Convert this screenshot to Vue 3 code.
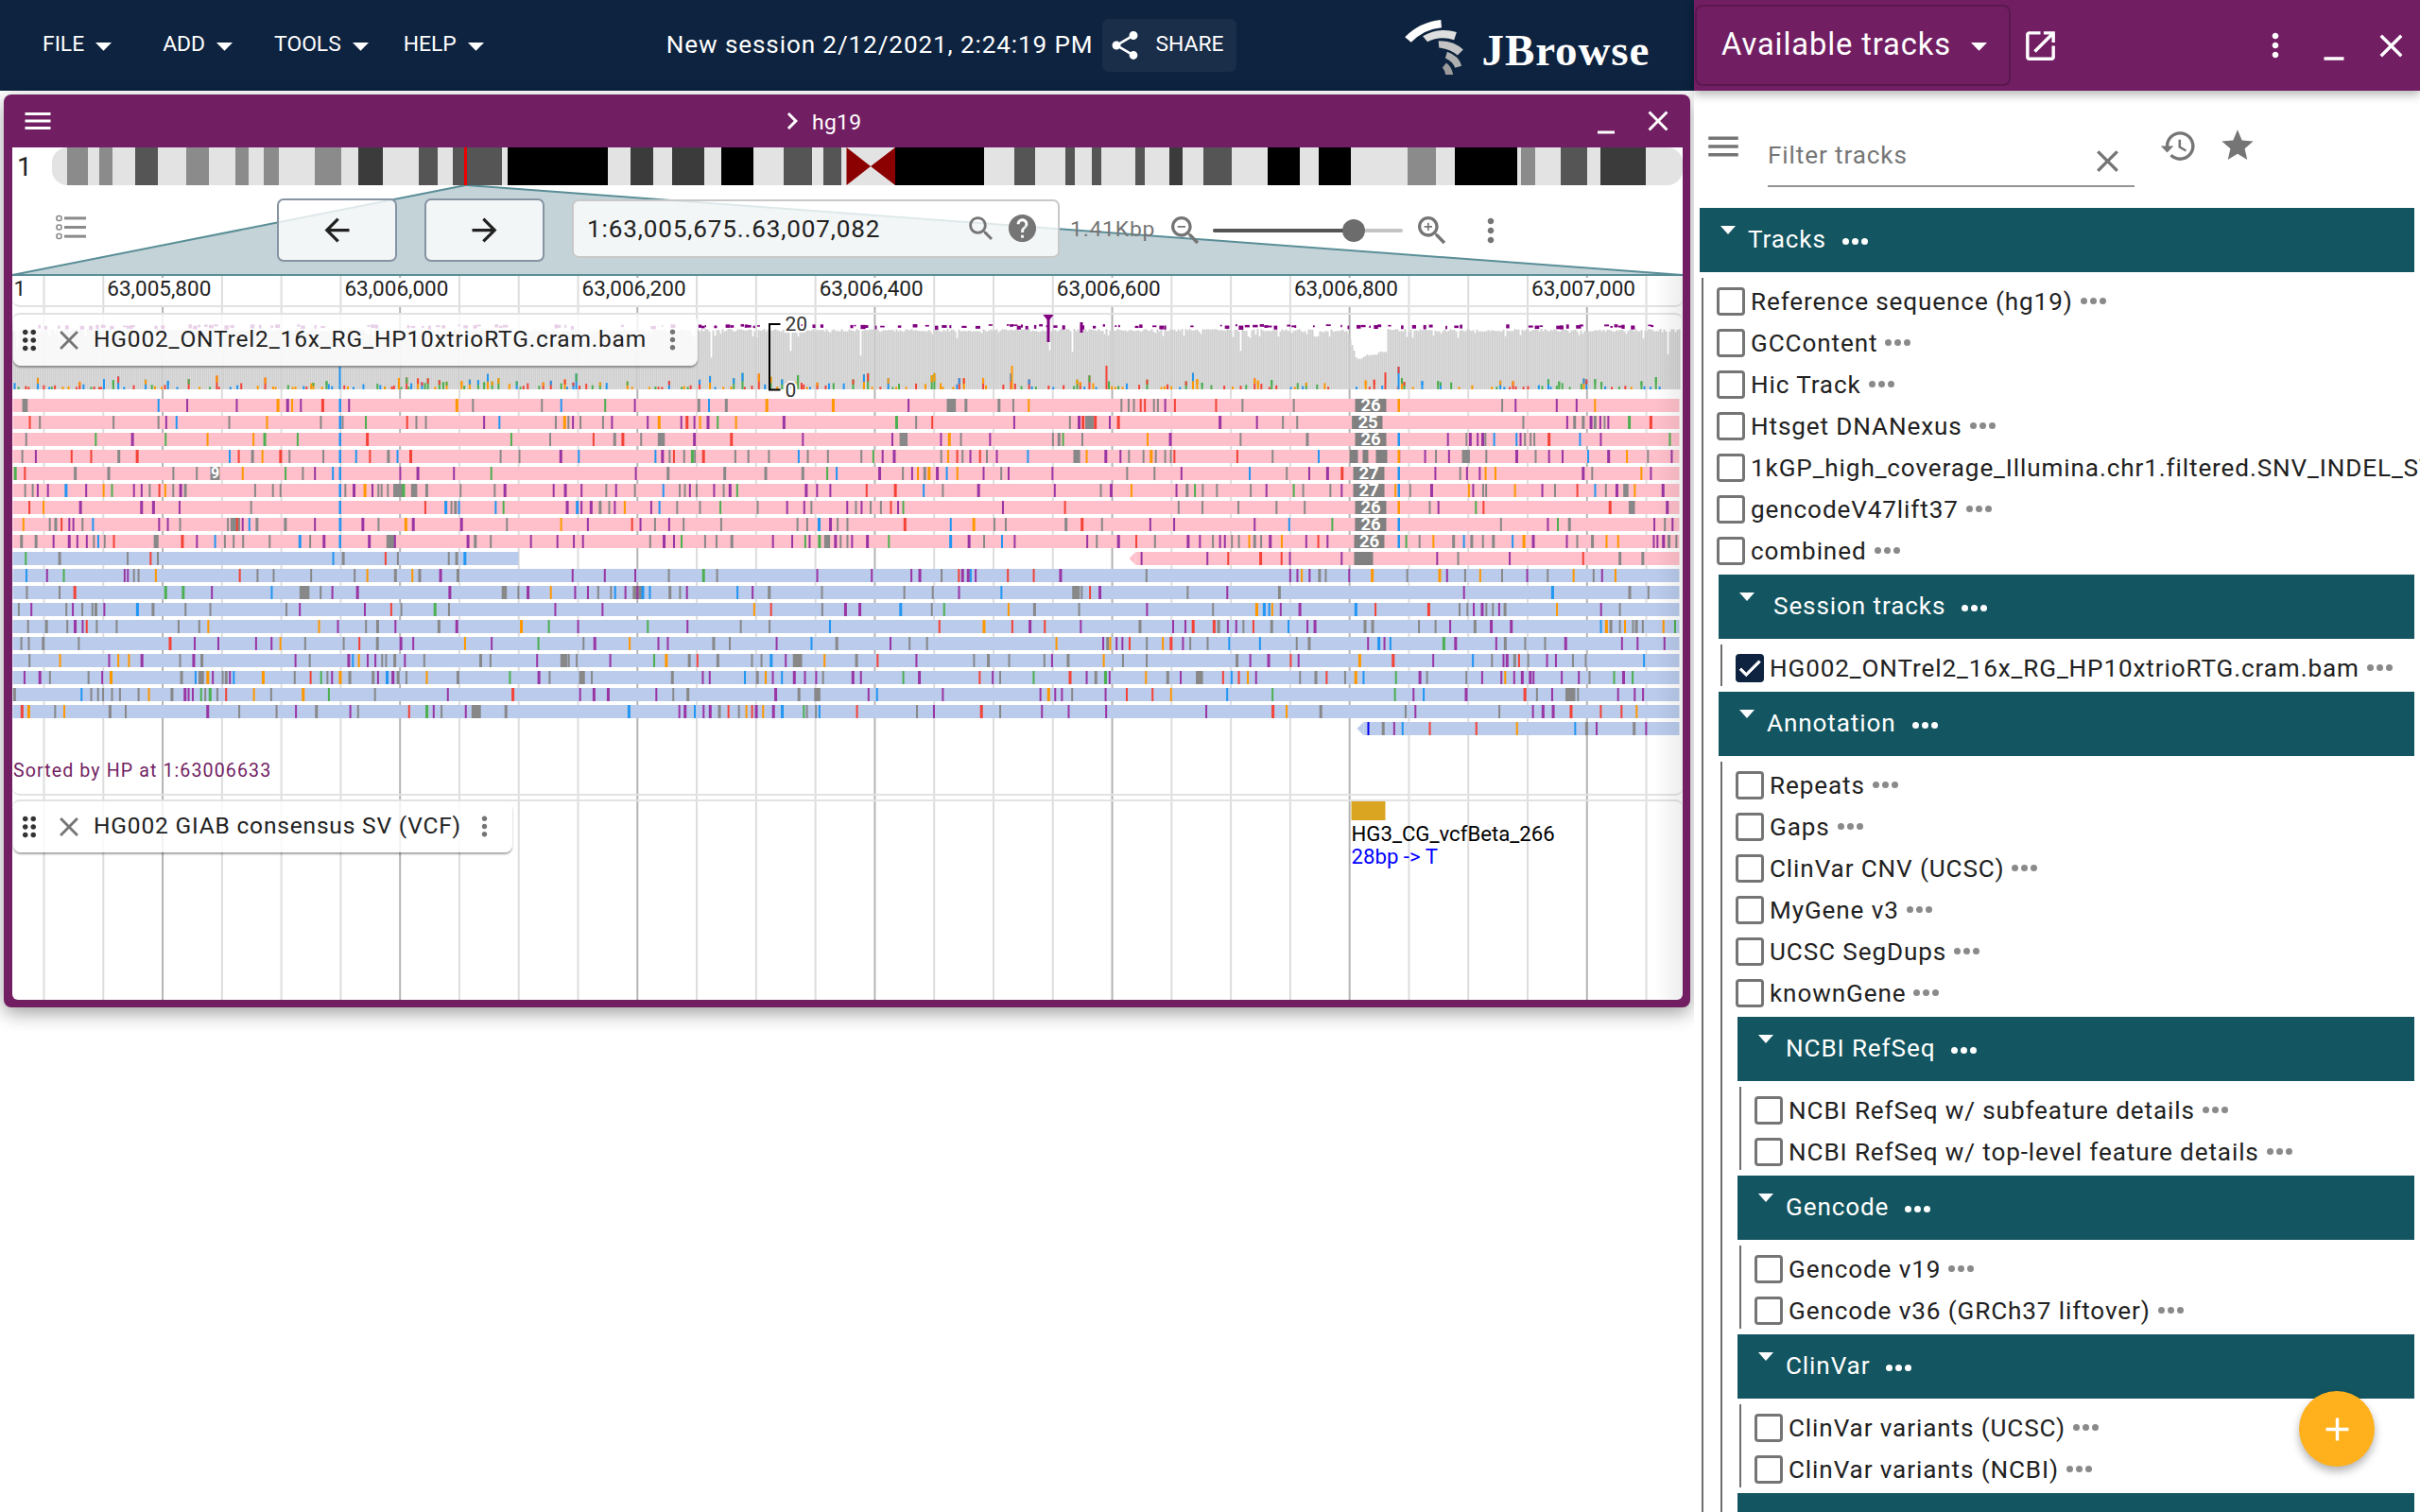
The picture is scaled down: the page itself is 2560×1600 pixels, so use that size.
<script setup>
const icons = {
  menu: 'M3 18h18v-2H3v2zm0-5h18v-2H3v2zm0-7v2h18V6H3z',
  close: 'M19 6.41L17.59 5 12 10.59 6.41 5 5 6.41 10.59 12 5 17.59 6.41 19 12 13.41 17.59 19 19 17.59 13.41 12z',
  minimize: 'M6 19h12v2H6z',
  more: 'M12 8c1.1 0 2-.9 2-2s-.9-2-2-2-2 .9-2 2 .9 2 2 2zm0 2c-1.1 0-2 .9-2 2s.9 2 2 2 2-.9 2-2-.9-2-2-2zm0 6c-1.1 0-2 .9-2 2s.9 2 2 2 2-.9 2-2-.9-2-2-2z',
  caret: 'M7 10l5 5 5-5z',
  share: 'M18 16.08c-.76 0-1.44.3-1.96.77L8.91 12.7c.05-.23.09-.46.09-.7s-.04-.47-.09-.7l7.05-4.11c.54.5 1.25.81 2.04.81 1.66 0 3-1.34 3-3s-1.34-3-3-3-3 1.34-3 3c0 .24.04.47.09.7L8.04 9.81C7.5 9.31 6.79 9 6 9c-1.66 0-3 1.34-3 3s1.34 3 3 3c.79 0 1.5-.31 2.04-.81l7.12 4.16c-.05.21-.08.43-.08.65 0 1.61 1.31 2.92 2.92 2.92 1.61 0 2.92-1.31 2.92-2.92s-1.31-2.92-2.92-2.92z',
  search: 'M15.5 14h-.79l-.28-.27C15.41 12.59 16 11.11 16 9.5 16 5.91 13.09 3 9.5 3S3 5.91 3 9.5 5.91 16 9.5 16c1.61 0 3.09-.59 4.23-1.57l.27.28v.79l5 4.99L20.49 19l-4.99-5zm-6 0C7.01 14 5 11.99 5 9.5S7.01 5 9.5 5 14 7.01 14 9.5 11.99 14 9.5 14z',
  help: 'M12 2C6.48 2 2 6.48 2 12s4.48 10 10 10 10-4.48 10-10S17.52 2 12 2zm1 17h-2v-2h2v2zm2.07-7.75l-.9.92C13.45 12.9 13 13.5 13 15h-2v-.5c0-1.1.45-2.1 1.17-2.83l1.24-1.26c.37-.36.59-.86.59-1.41 0-1.1-.9-2-2-2s-2 .9-2 2H8c0-2.21 1.79-4 4-4s4 1.79 4 4c0 .88-.36 1.68-.93 2.25z',
  zoomOut: 'M15.5 14h-.79l-.28-.27C15.41 12.59 16 11.11 16 9.5 16 5.91 13.09 3 9.5 3S3 5.91 3 9.5 5.91 16 9.5 16c1.61 0 3.09-.59 4.23-1.57l.27.28v.79l5 4.99L20.49 19l-4.99-5zm-6 0C7.01 14 5 11.99 5 9.5S7.01 5 9.5 5 14 7.01 14 9.5 11.99 14 9.5 14zM7 9h5v1H7z',
  zoomIn: 'M15.5 14h-.79l-.28-.27C15.41 12.59 16 11.11 16 9.5 16 5.91 13.09 3 9.5 3S3 5.91 3 9.5 5.91 16 9.5 16c1.61 0 3.09-.59 4.23-1.57l.27.28v.79l5 4.99L20.49 19l-4.99-5zm-6 0C7.01 14 5 11.99 5 9.5S7.01 5 9.5 5 14 7.01 14 9.5 11.99 14 9.5 14zm2.5-4h-2v2H9v-2H7V9h2V7h1v2h2v1z',
  history: 'M13 3c-4.97 0-9 4.03-9 9H1l3.89 3.89.07.14L9 12H6c0-3.87 3.13-7 7-7s7 3.13 7 7-3.13 7-7 7c-1.93 0-3.68-.79-4.94-2.06l-1.42 1.42C8.27 19.99 10.51 21 13 21c4.97 0 9-4.03 9-9s-4.03-9-9-9zm-1 5v5l4.28 2.54.72-1.21-3.5-2.08V8H12z',
  star: 'M12 17.27L18.18 21l-1.64-7.03L22 9.24l-7.19-.61L12 2 9.19 8.63 2 9.24l5.46 4.73L5.82 21z',
  open: 'M19 19H5V5h7V3H5c-1.11 0-2 .9-2 2v14c0 1.1.89 2 2 2h14c1.1 0 2-.9 2-2v-7h-2v7zM14 3v2h3.59l-9.83 9.83 1.41 1.41L19 6.41V10h2V3h-7z',
  drag: 'M11 18c0 1.1-.9 2-2 2s-2-.9-2-2 .9-2 2-2 2 .9 2 2zm-2-8c-1.1 0-2 .9-2 2s.9 2 2 2 2-.9 2-2-.9-2-2-2zm0-6c-1.1 0-2 .9-2 2s.9 2 2 2 2-.9 2-2-.9-2-2-2zm6 4c1.1 0 2-.9 2-2s-.9-2-2-2-2 .9-2 2 .9 2 2 2zm0 2c-1.1 0-2 .9-2 2s.9 2 2 2 2-.9 2-2-.9-2-2-2zm0 6c-1.1 0-2 .9-2 2s.9 2 2 2 2-.9 2-2-.9-2-2-2z',
  back: 'M20 11H7.83l5.59-5.59L12 4l-8 8 8 8 1.41-1.41L7.83 13H20v-2z',
  forward: 'M12 4l-1.41 1.41L16.17 11H4v2h12.17l-5.58 5.59L12 20l8-8z',
  chevron: 'M10 6L8.59 7.41 13.17 12l-4.58 4.59L10 18l6-6z',
  add: 'M19 13h-6v6h-2v-6H5v-2h6V5h2v6h6v2z',
}

const menus = ['FILE', 'ADD', 'TOOLS', 'HELP']

// cytobands, in page pixels
const G1 = '#8b8b8b'
const G2 = '#555555'
const G3 = '#3b3b3b'
const bands = [
  [71, 93, G1], [105, 119, G1], [143, 167, G2], [197, 221, G1], [249, 263, G1], [279, 295, G1],
  [333, 361, G1], [379, 405, G3], [443, 463, G2], [479, 531, G2], [537, 643, '#000'], [667, 691, G3],
  [711, 745, G3], [763, 797, '#000'], [829, 859, G2], [871, 890, G2], [947, 1041, '#000'], [1073, 1095, G2],
  [1127, 1137, G2], [1155, 1165, G2], [1201, 1211, G2], [1237, 1251, G3], [1273, 1303, G2], [1341, 1375, '#000'],
  [1395, 1429, '#000'], [1489, 1519, G1], [1539, 1605, '#000'], [1609, 1624, G1], [1651, 1679, G2], [1693, 1741, G3],
]

const ticks = []
for (let k = 0; k < 28; k++) ticks.push({ x: 45 + 62.78 * k, major: k % 4 === 2 })
const rulerLabels = ['63,005,800', '63,006,000', '63,006,200', '63,006,400', '63,006,600', '63,006,800', '63,007,000']
  .map((text, i) => ({ text, x: 45 + 62.78 * (1 + i * 4) + 5 }))

// seeded so the picture stays the same between runs
let seed = 20210212
function rnd() {
  seed |= 0
  seed = (seed + 0x6d2b79f5) | 0
  let t = Math.imul(seed ^ (seed >>> 15), 1 | seed)
  t = (t + Math.imul(t ^ (t >>> 7), 61 | t)) ^ t
  return ((t ^ (t >>> 14)) >>> 0) / 4294967296
}

const GREY = '#888888'
const PURPLE = '#9a35a4'
const RED = '#f44336'
const ORANGE = '#ff9800'
const BLUE = '#2196f3'
const GREEN = '#4caf50'
function pickColor() {
  const r = rnd()
  if (r < 0.38) return GREY
  if (r < 0.68) return PURPLE
  if (r < 0.78) return RED
  if (r < 0.86) return ORANGE
  if (r < 0.94) return BLUE
  return GREEN
}

const reads = []
const marks = []
function addRead(y, x1, x2, fill, mean) {
  reads.push({ x: x1, y, w: x2 - x1, fill })
  let x = x1 + rnd() * 20
  let burst = 0
  while (x < x2 - 2) {
    const c = pickColor()
    const w = c === GREY && rnd() < 0.08 ? 5 + rnd() * 6 : 2 + Math.round(rnd() * 0.7)
    if (x + w < x2) marks.push({ x, y, w, fill: c })
    if (burst > 0) {
      burst--
      x += 3 + rnd() * 8
    } else {
      if (rnd() < 0.07) burst = 2 + Math.floor(rnd() * 6)
      x += 7 + -Math.log(1 - rnd()) * mean
    }
  }
}

const pinkMean = [40, 37, 30, 22, 29, 14, 35, 30, 19]
pinkMean.forEach((m, i) => addRead(422 + 18 * i, 13, 1776, '#ffc0cb', m))
addRead(584, 13, 548, '#bacbec', 24)
addRead(584, 1201, 1776, '#ffc0cb', 22)
const blueMean = [30, 30, 34, 29, 26, 30, 18, 26, 26]
blueMean.forEach((m, i) => addRead(602 + 18 * i, 13, 1776, '#bacbec', m))
addRead(764, 1442, 1776, '#bacbec', 24)

// the common SNP column near the middle and the homopolymer column
for (let i = 0; i < 9; i++) {
  marks.push({ x: 358, y: 422 + 18 * i, w: 2.5, fill: BLUE })
  if (i !== 1) marks.push({ x: 1478, y: 422 + 18 * i, w: 2.5, fill: i % 3 ? BLUE : ORANGE })
}
marks.push({ x: 222, y: 494, w: 10, fill: GREY })

const insertions = [
  { x: 1433, w: 33, y: 422, t: '26' }, { x: 1431, w: 31, y: 440, t: '25' }, { x: 1433, w: 33, y: 458, t: '26' },
  { x: 1431, w: 33, y: 494, t: '27' }, { x: 1431, w: 33, y: 512, t: '27' }, { x: 1433, w: 33, y: 530, t: '26' },
  { x: 1433, w: 33, y: 548, t: '26' }, { x: 1432, w: 32, y: 566, t: '26' },
  { x: 1427, w: 9, y: 476, t: '' }, { x: 1441, w: 6, y: 476, t: '' }, { x: 1455, w: 12, y: 476, t: '' },
  { x: 1432, w: 20, y: 584, t: '' },
]

// coverage
const coverage = []
for (let x = 13; x < 1776; x += 2) {
  let top = 348 + rnd() * 3
  if (rnd() < 0.12) top += rnd() * 8
  if (rnd() < 0.012) top += 10 + rnd() * 22
  if (x > 1350 && x < 1400 && rnd() < 0.25) top += rnd() * 10
  if (x >= 1433 && x <= 1466) top = 378 - (x - 1433) * 0.24 + rnd() * 3
  if (x > 1424 && x < 1433) top = 350 + (x - 1424) * 3
  coverage.push({ x, y: top, h: 412 - top })
}

const snpCols = []
for (let x = 14; x < 1774;) {
  const h = 2.5 + Math.pow(rnd(), 3) * 15
  const c = [ORANGE, RED, BLUE, GREEN][Math.floor(rnd() * 4)]
  const c2 = [ORANGE, RED, BLUE, GREEN][Math.floor(rnd() * 4)]
  snpCols.push({ x, y: 412 - h, h, fill: c })
  if (h > 7) snpCols.push({ x, y: 412 - h, h: h / 2, fill: c2 })
  x += 2.2 + -Math.log(1 - rnd()) * 4.5
}
snpCols.push({ x: 358, y: 388, h: 24, fill: BLUE }, { x: 1069, y: 387, h: 25, fill: ORANGE },
  { x: 1169, y: 387, h: 25, fill: RED }, { x: 1464, y: 394, h: 18, fill: RED },
  { x: 1478, y: 388, h: 24, fill: BLUE }, { x: 1478, y: 388, h: 7, fill: RED })

const purple = []
for (let x = 500; x < 1776;) {
  const w = 1.5 + rnd() * 4
  if (x < 810 || x > 830) purple.push({ x, y: 343 + rnd() * 2, w, h: 1.5 + rnd() * 3 })
  x += 3 + -Math.log(1 - rnd()) * 8
}
for (let x = 40; x < 500;) {
  purple.push({ x, y: 343 + rnd() * 2, w: 2 + rnd() * 3, h: 1.5 + rnd() * 3 })
  x += 3 + -Math.log(1 - rnd()) * 9
}

const topTracks = ['Reference sequence (hg19)', 'GCContent', 'Hic Track', 'Htsget DNANexus',
  '1kGP_high_coverage_Illumina.chr1.filtered.SNV_INDEL_SV_phased_panel', 'gencodeV47lift37', 'combined']
const annotationTracks = ['Repeats', 'Gaps', 'ClinVar CNV (UCSC)', 'MyGene v3', 'UCSC SegDups', 'knownGene']
const subGroups = [
  { name: 'NCBI RefSeq', tracks: ['NCBI RefSeq w/ subfeature details', 'NCBI RefSeq w/ top-level feature details'] },
  { name: 'Gencode', tracks: ['Gencode v19', 'Gencode v36 (GRCh37 liftover)'] },
  { name: 'ClinVar', tracks: ['ClinVar variants (UCSC)', 'ClinVar variants (NCBI)'] },
]
</script>

<template>
  <div class="app">
    <div class="main">
      <header class="topbar">
        <button v-for="m in menus" :key="m" class="menu-btn">
          <span class="lift">{{ m }}</span><svg class="i caret" viewBox="0 0 24 24"><path :d="icons.caret" /></svg>
        </button>
        <span class="session lift">New session 2/12/2021, 2:24:19 PM</span>
        <div class="share">
          <svg class="i share-i" viewBox="0 0 24 24"><path :d="icons.share" /></svg>
          <span class="lift">SHARE</span>
        </div>
        <div class="logo">
          <svg class="logo-mark" viewBox="48 33 186 178">
            <path fill="#ffffff" d="M48 88Q95 40 163 33L165 58Q110 62 68 105Z" />
            <path fill="#dedede" d="M105 85Q155 55 213 72L205 97Q160 83 120 103Z" />
            <path fill="#c4c4c4" d="M155 100Q205 100 234 128L216 146Q190 124 157 122Z" />
            <path fill="#b0b0b0" d="M183 135Q220 148 229 180L208 186Q200 165 177 155Z" />
            <path fill="#9c9c9c" d="M180 170Q197 182 202 208L178 208Q176 195 168 185Z" />
          </svg>
          <span class="logo-text">JBrowse</span>
        </div>
      </header>

      <section class="view">
        <div class="view-head">
          <svg class="i head-menu" viewBox="0 0 24 24"><path :d="icons.menu" /></svg>
          <svg class="i head-chevron" viewBox="0 0 24 24"><path :d="icons.chevron" /></svg>
          <span class="view-name">hg19</span>
          <svg class="i head-min" viewBox="0 0 24 24"><path :d="icons.minimize" /></svg>
          <svg class="i head-close" viewBox="0 0 24 24"><path :d="icons.close" /></svg>
        </div>

        <div class="view-body">
          <div class="overview">
            <span class="chrom">1</span>
            <svg class="bands" viewBox="55 0 1725 40" width="1725" height="40">
              <rect x="55" y="0" width="1725" height="40" rx="16" fill="#e3e3e3" />
              <rect v-for="b in bands" :key="b[0]" :x="b[0]" y="0" :width="b[1] - b[0]" height="40" :fill="b[2]" />
              <polygon points="895.5,0 921,20 895.5,40" fill="#8b0000" />
              <polygon points="947,0 921,20 947,40" fill="#8b0000" />
              <rect x="491" y="0" width="3" height="40" fill="#ee0000" />
            </svg>
          </div>

          <div class="toolbar">
            <svg class="zoom-poly" viewBox="12.5 196 1767 96" width="1767" height="96">
              <polygon points="492,196 494,196 1780,291 12.5,291" fill="#c4d3d7" stroke="#5a8e97" stroke-width="2" />
            </svg>
            <svg class="list-i" viewBox="0 0 32 27">
              <g fill="none" stroke="#8a8a8a" stroke-width="1.6">
                <rect x="1" y="1.5" width="5" height="5" rx="2" />
                <rect x="1" y="11" width="5" height="5" rx="2" />
                <rect x="1" y="20.5" width="5" height="5" rx="2" />
              </g>
              <rect x="9" y="2.4" width="23" height="3" fill="#8a8a8a" />
              <rect x="9" y="12" width="23" height="3" fill="#8a8a8a" />
              <rect x="9" y="21.6" width="23" height="3" fill="#8a8a8a" />
            </svg>
            <button class="nav-btn first"><svg class="i" viewBox="0 0 24 24"><path :d="icons.back" /></svg></button>
            <button class="nav-btn second"><svg class="i" viewBox="0 0 24 24"><path :d="icons.forward" /></svg></button>
            <div class="locstring">
              <span class="loc-text">1:63,005,675..63,007,082</span>
              <svg class="i loc-search" viewBox="0 0 24 24"><path :d="icons.search" /></svg>
              <svg class="i loc-help" viewBox="0 0 24 24"><path :d="icons.help" /></svg>
            </div>
            <span class="bp">1.41Kbp</span>
            <svg class="i zoom-i out" viewBox="0 0 24 24"><path :d="icons.zoomOut" /></svg>
            <div class="slider"><div class="slider-fill"></div><div class="slider-thumb"></div></div>
            <svg class="i zoom-i in" viewBox="0 0 24 24"><path :d="icons.zoomIn" /></svg>
            <svg class="i tool-more" viewBox="0 0 24 24"><path :d="icons.more" /></svg>
          </div>

          <div class="panels">
            <svg class="canvas" viewBox="12.5 291 1767 767" width="1767" height="767">
              <rect v-for="t in ticks" :key="t.x" :x="t.x" y="292" width="2" height="766"
                :fill="t.major ? '#b4b4b4' : '#dddddd'" />
              <text x="14" y="313" class="ruler-text">1</text>
              <template v-for="l in rulerLabels" :key="l.text">
                <rect :x="l.x - 2" y="294" width="113" height="30" fill="#fff" />
                <text :x="l.x" y="313" class="ruler-text">{{ l.text }}</text>
              </template>

              <rect v-for="c in coverage" :key="c.x" :x="c.x" :y="c.y" width="2" :height="c.h" fill="#cfcfcf" />
              <rect v-for="(s, i) in snpCols" :key="'s' + i" :x="s.x" :y="s.y" width="2" :height="s.h" :fill="s.fill" />
              <rect v-for="(p, i) in purple" :key="'p' + i" :x="p.x" :y="p.y" :width="p.w" :height="p.h" fill="#800080" />
              <polygon points="1102,332 1115,332 1108.5,340" fill="#800080" />
              <rect x="1107" y="338" width="3" height="24" fill="#800080" />
              <rect x="1142" y="341" width="3" height="11" fill="#800080" />

              <path d="M825 343H813.5V412.5H825" fill="none" stroke="#000" stroke-width="2" />
              <text x="830" y="350" class="axis-text">20</text>
              <text x="830" y="420" class="axis-text">0</text>

              <rect v-for="(r, i) in reads" :key="'r' + i" :x="r.x" :y="r.y" :width="r.w" height="14" :fill="r.fill" />
              <rect v-for="(m, i) in marks" :key="'m' + i" :x="m.x" :y="m.y" :width="m.w" height="14" :fill="m.fill" />
              <polygon points="1201,584 1201,598 1194,591" fill="#ffc0cb" />
              <polygon points="1442,764 1442,778 1435,771" fill="#bacbec" />
              <rect x="1446" y="764" width="2" height="14" fill="#0000ee" />
              <template v-for="(n, i) in insertions" :key="'n' + i">
                <rect :x="n.x" :y="n.y" :width="n.w" height="14" fill="#808080" />
                <text v-if="n.t" :x="n.x + n.w / 2" :y="n.y + 13" class="ins-text">{{ n.t }}</text>
              </template>
              <text x="227" y="506" class="ins-text small">9</text>

              <rect x="1429" y="848" width="36" height="20" fill="#daa520" />
              <text x="1429" y="890" class="feat-name">HG3_CG_vcfBeta_266</text>
              <text x="1429" y="914" class="feat-desc">28bp -&gt; T</text>
            </svg>

            <div class="ruler"></div>
            <div class="track track-reads">
              <div class="track-label">
                <svg class="i tl-drag" viewBox="0 0 24 24"><path :d="icons.drag" /></svg>
                <svg class="i tl-close" viewBox="0 0 24 24"><path :d="icons.close" /></svg>
                <span class="tl-name">HG002_ONTrel2_16x_RG_HP10xtrioRTG.cram.bam</span>
                <svg class="i tl-more" viewBox="0 0 24 24"><path :d="icons.more" /></svg>
              </div>
              <span class="sorted">Sorted by HP at 1:63006633</span>
            </div>
            <div class="track track-sv">
              <div class="track-label">
                <svg class="i tl-drag" viewBox="0 0 24 24"><path :d="icons.drag" /></svg>
                <svg class="i tl-close" viewBox="0 0 24 24"><path :d="icons.close" /></svg>
                <span class="tl-name">HG002 GIAB consensus SV (VCF)</span>
                <svg class="i tl-more" viewBox="0 0 24 24"><path :d="icons.more" /></svg>
              </div>
            </div>
            <div class="edge-fade"></div>
          </div>
        </div>
      </section>
    </div>

    <aside class="drawer">
      <div class="drawer-head">
        <div class="widget-select">
          <span class="lift">Available tracks</span>
          <svg class="i ws-caret" viewBox="0 0 24 24"><path :d="icons.caret" /></svg>
        </div>
        <svg class="i ws-open" viewBox="0 0 24 24"><path :d="icons.open" /></svg>
        <svg class="i ws-more" viewBox="0 0 24 24"><path :d="icons.more" /></svg>
        <svg class="i ws-min" viewBox="0 0 24 24"><path :d="icons.minimize" /></svg>
        <svg class="i ws-close" viewBox="0 0 24 24"><path :d="icons.close" /></svg>
      </div>

      <div class="filter-row">
        <svg class="i fr-menu" viewBox="0 0 24 24"><path :d="icons.menu" /></svg>
        <div class="filter-input">
          <span class="filter-hint">Filter tracks</span>
          <svg class="i fr-clear" viewBox="0 0 24 24"><path :d="icons.close" /></svg>
        </div>
        <svg class="i fr-history" viewBox="0 0 24 24"><path :d="icons.history" /></svg>
        <svg class="i fr-star" viewBox="0 0 24 24"><path :d="icons.star" /></svg>
      </div>

      <div class="tree">
        <div class="cat">
          <i class="tri"></i><span class="cat-name">Tracks</span><span class="dots"><i></i><i></i><i></i></span>
        </div>
        <div class="branch long">
          <div class="rows">
            <label v-for="t in topTracks" :key="t" class="row">
              <span class="box"></span><span class="row-name">{{ t }}</span>
              <span class="dots grey"><i></i><i></i><i></i></span>
            </label>
          </div>

          <div class="cat">
            <i class="tri"></i><span class="cat-name wide">Session tracks</span><span class="dots"><i></i><i></i><i></i></span>
          </div>
          <div class="branch">
            <div class="rows">
              <label class="row">
                <span class="box checked">
                  <svg viewBox="0 0 24 24"><path fill="#fff" stroke="#fff" stroke-width="0.8" d="M9 16.17L4.83 12l-1.42 1.41L9 19 21 7l-1.41-1.41z" /></svg>
                </span>
                <span class="row-name">HG002_ONTrel2_16x_RG_HP10xtrioRTG.cram.bam</span>
                <span class="dots grey"><i></i><i></i><i></i></span>
              </label>
            </div>
          </div>

          <div class="cat">
            <i class="tri"></i><span class="cat-name">Annotation</span><span class="dots"><i></i><i></i><i></i></span>
          </div>
          <div class="branch long">
            <div class="rows">
              <label v-for="t in annotationTracks" :key="t" class="row">
                <span class="box"></span><span class="row-name">{{ t }}</span>
                <span class="dots grey"><i></i><i></i><i></i></span>
              </label>
            </div>
            <template v-for="g in subGroups" :key="g.name">
              <div class="cat">
                <i class="tri"></i><span class="cat-name">{{ g.name }}</span><span class="dots"><i></i><i></i><i></i></span>
              </div>
              <div class="branch">
                <div class="rows">
                  <label v-for="t in g.tracks" :key="t" class="row">
                    <span class="box"></span><span class="row-name">{{ t }}</span>
                    <span class="dots grey"><i></i><i></i><i></i></span>
                  </label>
                </div>
              </div>
            </template>
            <div class="cat"></div>
          </div>
        </div>
      </div>

      <button class="fab"><svg class="i" viewBox="0 0 24 24"><path :d="icons.add" /></svg></button>
    </aside>
  </div>
</template>

<style>
html, body {
  margin: 0;
  background: #fff;
}
</style>

<style scoped>
.app {
  display: flex;
  width: 2560px;
  height: 1600px;
  overflow: hidden;
  font-family: Roboto, "Noto Sans", sans-serif;
  color: #212121;
}
.i {
  display: block;
  flex: none;
  fill: currentColor;
}
button {
  font: inherit;
  border: none;
  background: none;
  padding: 0;
  color: inherit;
}
.lift {
  margin-bottom: 3px;
}

/* app bar */
.main {
  width: 1792px;
  flex: none;
}
.topbar {
  display: flex;
  align-items: center;
  height: 96px;
  padding-left: 45px;
  background: #0d233f;
  color: #fff;
}
.menu-btn {
  display: flex;
  align-items: center;
  font-size: 22.86px;
}
.menu-btn:nth-child(2) { margin-left: 42px; }
.menu-btn:nth-child(3) { margin-left: 32px; }
.menu-btn:nth-child(4) { margin-left: 25px; }
.caret {
  width: 41px;
  height: 41px;
}
.session {
  margin-left: 181px;
  font-size: 26.1px;
  letter-spacing: 0.89px;
  white-space: nowrap;
}
.share {
  display: flex;
  align-items: center;
  width: 142px;
  height: 56px;
  margin-left: 9px;
  padding-left: 6px;
  box-sizing: border-box;
  border-radius: 7px;
  background: #1a2e49;
  font-size: 22.86px;
}
.share-i {
  width: 36px;
  height: 36px;
  margin-right: 15px;
}
.logo {
  display: flex;
  align-items: center;
  margin-left: 178px;
  margin-top: 5px;
}
.logo-mark {
  width: 62px;
  height: 59px;
}
.logo-text {
  margin-left: 20px;
  margin-top: 4px;
  font-family: "Liberation Serif", serif;
  font-weight: 700;
  font-size: 47px;
  letter-spacing: 0.9px;
}

/* linear genome view */
.view {
  position: relative;
  margin: 4px 4px 0;
  width: 1784px;
  height: 966px;
  box-sizing: border-box;
  padding: 0 8.5px 8px;
  border-radius: 8px;
  background: #721e63;
  box-shadow: 0 6px 20px rgba(0, 0, 0, 0.38);
}
.view-head {
  display: flex;
  align-items: center;
  height: 56px;
  margin: 0 -8.5px;
  padding: 0 16.5px 0 17.5px;
  color: #fff;
}
.head-menu { width: 36px; height: 36px; }
.head-chevron { width: 36px; height: 36px; margin-left: 762.5px; }
.view-name {
  margin-left: 3px;
  margin-top: 2px;
  font-size: 22.86px;
  letter-spacing: 0.3px;
}
.head-min { width: 36px; height: 36px; margin-left: auto; }
.head-close { width: 36px; height: 36px; margin-left: 18.5px; }
.view-body {
  height: 902px;
  background: #fff;
  border-radius: 0 0 6px 6px;
  overflow: hidden;
}
.overview {
  display: flex;
  align-items: center;
  height: 40px;
}
.chrom {
  width: 42.5px;
  padding-left: 5.5px;
  box-sizing: border-box;
  font-size: 28px;
}
.bands {
  display: block;
  flex: none;
}

.toolbar {
  position: relative;
  display: flex;
  align-items: center;
  height: 95px;
  padding-left: 46.5px;
}
.toolbar > *:not(.zoom-poly) {
  position: relative;
}
.zoom-poly {
  position: absolute;
  left: 0;
  top: 0;
}
.list-i {
  width: 32px;
  height: 27px;
  flex: none;
  margin-top: -6px;
}
.nav-btn {
  display: flex;
  align-items: center;
  justify-content: center;
  flex: none;
  width: 127px;
  height: 67px;
  box-sizing: border-box;
  border: 2px solid #8593a3;
  border-radius: 7px;
  background: rgba(255, 255, 255, 0.8);
  color: #212121;
}
.nav-btn .i {
  width: 39px;
  height: 39px;
}
.nav-btn.first { margin-left: 201.5px; }
.nav-btn.second { margin-left: 29px; }
.locstring {
  display: flex;
  align-items: center;
  flex: none;
  width: 516px;
  height: 62px;
  margin-left: 29.5px;
  margin-top: -4px;
  padding: 0 20px 0 14px;
  box-sizing: border-box;
  border: 2px solid #c8c8c8;
  border-radius: 7px;
  background: rgba(255, 255, 255, 0.8);
}
.loc-text {
  flex: 1;
  font-size: 26.1px;
  letter-spacing: 0.85px;
  white-space: nowrap;
}
.loc-search { width: 34px; height: 34px; color: #757575; }
.loc-help { width: 35px; height: 35px; margin-left: 9px; color: #757575; }
.bp {
  margin-left: 11px;
  margin-top: -3px;
  width: 91px;
  font-size: 22.86px;
  letter-spacing: 0.8px;
  color: #757575;
  white-space: nowrap;
}
.zoom-i {
  width: 40px;
  height: 40px;
  color: #757575;
}
.zoom-i.out { margin-left: 11px; }
.zoom-i.in { margin-left: 11px; }
.slider {
  flex: none;
  width: 201px;
  height: 4px;
  margin-left: 9px;
  border-radius: 2px;
  background: #c4c4c4;
}
.slider-fill {
  position: absolute;
  left: 0;
  top: 0;
  width: 149px;
  height: 4px;
  border-radius: 2px;
  background: #555;
}
.slider-thumb {
  position: absolute;
  left: 137px;
  top: -10px;
  width: 24px;
  height: 24px;
  border-radius: 50%;
  background: #6c6c6c;
}
.tool-more {
  width: 40px;
  height: 40px;
  margin-left: 22px;
  color: #757575;
}

/* tracks */
.panels {
  position: relative;
  height: 767px;
}
.canvas {
  position: absolute;
  left: 0;
  top: 0;
}
.ruler-text {
  font-size: 22.5px;
  fill: #212121;
}
.axis-text {
  font-size: 21px;
  fill: #333;
  stroke: #fff;
  stroke-width: 4px;
  paint-order: stroke;
}
.ins-text {
  font-size: 18.5px;
  font-weight: 700;
  fill: #fff;
  text-anchor: middle;
}
.ins-text.small {
  font-size: 16px;
}
.feat-name {
  font-size: 22.2px;
  fill: #000;
}
.feat-desc {
  font-size: 22.2px;
  fill: #0000ff;
}
.ruler {
  position: relative;
  height: 34px;
  box-sizing: border-box;
  border-bottom: 2px solid #e2e2e2;
  border-radius: 0 0 8px 8px;
}
.track {
  position: relative;
  box-sizing: border-box;
  border-top: 2px solid #e2e2e2;
  border-bottom: 2px solid #e2e2e2;
  border-radius: 8px;
}
.track-reads {
  height: 511px;
  margin-top: 6px;
}
.track-sv {
  height: 212px;
  margin-top: 4px;
  border-bottom-color: transparent;
}
.track-label {
  position: absolute;
  left: 1.5px;
  top: 0;
  display: flex;
  align-items: center;
  height: 54px;
  padding-right: 10px;
  border-radius: 8px;
  background: rgba(255, 255, 255, 0.82);
  box-shadow: 0 2px 2px rgba(0, 0, 0, 0.35);
}
.track-sv .track-label {
  padding-right: 13px;
}
.tl-drag { width: 34px; height: 34px; color: #333; }
.tl-close { width: 34px; height: 34px; margin-left: 8px; color: #757575; }
.tl-name {
  margin-left: 9px;
  margin-bottom: 4px;
  font-size: 24.5px;
  letter-spacing: 0.82px;
  white-space: nowrap;
}
.tl-more { width: 33px; height: 33px; margin-left: 11px; margin-bottom: 2px; color: #757575; }
.track-sv .tl-more {
  margin-left: 8px;
}
.sorted {
  position: absolute;
  left: 1.5px;
  bottom: 13px;
  font-size: 19.6px;
  letter-spacing: 1.1px;
  color: #721e63;
}
.edge-fade {
  position: absolute;
  right: 0;
  top: 0;
  bottom: 0;
  width: 30px;
  pointer-events: none;
  background: linear-gradient(to right, rgba(0, 0, 0, 0), rgba(0, 0, 0, 0.07));
}

/* track selector drawer */
.drawer {
  position: relative;
  width: 768px;
  flex: none;
  background: #fff;
}
.drawer-head {
  position: relative;
  display: flex;
  align-items: center;
  height: 96px;
  padding-right: 10.5px;
  box-sizing: border-box;
  background: #721e63;
  color: #fff;
  box-shadow: 0 4px 10px rgba(0, 0, 0, 0.3);
}
.widget-select {
  display: flex;
  align-items: center;
  width: 334px;
  height: 86px;
  margin-left: 1px;
  padding-left: 26px;
  box-sizing: border-box;
  border: 2px solid #5b1850;
  border-radius: 8px;
  font-size: 32.66px;
  letter-spacing: 0.9px;
  white-space: nowrap;
}
.ws-caret { width: 41px; height: 41px; margin-left: 9px; }
.ws-open { width: 41px; height: 41px; margin-left: 11px; }
.ws-more { width: 40px; height: 40px; margin-left: auto; }
.ws-min { width: 42px; height: 42px; margin-left: 20.5px; }
.ws-close { width: 41px; height: 41px; margin-left: 19px; }

.filter-row {
  display: flex;
  align-items: flex-start;
  height: 124px;
  padding-left: 10px;
  box-sizing: border-box;
  color: #757575;
}
.fr-menu { width: 42px; height: 42px; margin-top: 37.5px; }
.filter-input {
  display: flex;
  align-items: center;
  justify-content: space-between;
  width: 388px;
  height: 50px;
  margin-top: 52px;
  margin-left: 26px;
  box-sizing: border-box;
  border-bottom: 2px solid #949494;
  font-size: 26.1px;
}
.filter-hint {
  margin-bottom: 16px;
  letter-spacing: 0.89px;
}
.fr-clear { width: 39px; height: 39px; margin-right: 9px; margin-bottom: 3px; }
.fr-history { width: 41px; height: 41px; margin-top: 37.5px; margin-left: 26px; }
.fr-star { width: 40px; height: 40px; margin-top: 38px; margin-left: 21.5px; }

.tree {
  padding: 0 6px;
  height: 1380px;
  overflow: hidden;
}
.cat {
  display: flex;
  align-items: center;
  height: 68px;
  padding-left: 22px;
  background: #135560;
  color: #fff;
  font-size: 26.1px;
  letter-spacing: 0.89px;
}
.tri {
  align-self: flex-start;
  margin-top: 19px;
  width: 0;
  height: 0;
  border-left: 8.5px solid transparent;
  border-right: 8.5px solid transparent;
  border-top: 9px solid #fff;
}
.cat-name {
  margin-left: 13px;
  margin-top: -2px;
}
.cat-name.wide {
  margin-left: 20px;
}
.dots {
  display: inline-flex;
  gap: 3px;
  margin-left: 17px;
  margin-top: 3px;
  flex: none;
}
.dots i {
  width: 7px;
  height: 7px;
  border-radius: 50%;
  background: #fff;
}
.dots.grey {
  margin-left: 8px;
  margin-top: 0;
}
.dots.grey i {
  background: #8a8a8a;
}
.branch {
  position: relative;
  margin-left: 2px;
  padding-left: 18px;
}
.branch::before {
  content: "";
  position: absolute;
  left: 0;
  top: 6px;
  bottom: 6px;
  width: 2px;
  background: #6e6e6e;
}
.branch.long::before {
  bottom: 0;
}
.rows {
  padding: 8.5px 0 3.5px;
}
.row {
  display: flex;
  align-items: center;
  height: 44px;
  margin-left: -2px;
  font-size: 26.1px;
  letter-spacing: 0.89px;
  white-space: nowrap;
}
.box {
  flex: none;
  width: 30px;
  height: 30px;
  box-sizing: border-box;
  border: 3px solid #757575;
  border-radius: 4px;
  margin-right: 6px;
}
.box.checked {
  border: none;
  background: #0d233f;
}
.box.checked svg {
  display: block;
  width: 30px;
  height: 30px;
}
.fab {
  position: absolute;
  right: 48px;
  bottom: 48px;
  display: flex;
  align-items: center;
  justify-content: center;
  width: 80px;
  height: 80px;
  border-radius: 50%;
  background: #ffb11d;
  color: #fff;
  box-shadow: 0 5px 10px rgba(0, 0, 0, 0.3);
}
.fab .i {
  width: 41px;
  height: 41px;
}
</style>
